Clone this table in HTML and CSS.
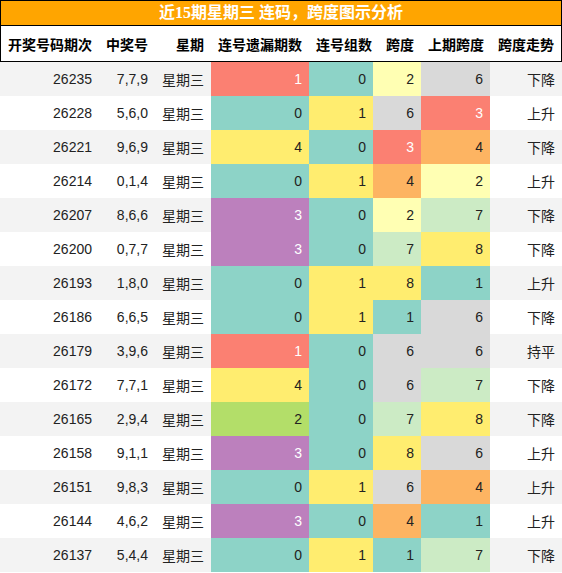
FILE: index.html
```html
<!DOCTYPE html>
<html lang="zh">
<head>
  <meta charset="UTF-8">
  <title>连码跨度图示分析</title>
  <link rel="stylesheet" href="styles.css">
</head>
<body>
  <!-- Title bar -->
  <div class="titleBar">近15期星期三 连码，跨度图示分析</div>

  <table class="spanTable">
    <colgroup>
      <col style="width:99px">
      <col style="width:56px">
      <col style="width:56px">
      <col style="width:98px">
      <col style="width:64px">
      <col style="width:48px">
      <col style="width:69px">
      <col style="width:72px">
    </colgroup>
    <thead>
      <tr>
        <th>开奖号码期次</th>
        <th>中奖号</th>
        <th>星期</th>
        <th>连号遗漏期数</th>
        <th>连号组数</th>
        <th>跨度</th>
        <th>上期跨度</th>
        <th>跨度走势</th>
      </tr>
    </thead>
    <tbody>
      <tr><td>26235</td><td>7,7,9</td><td>星期三</td><td class="c-salmon">1</td><td class="c-teal">0</td><td class="c-lyellow">2</td><td class="c-grey">6</td><td>下降</td></tr>
      <tr><td>26228</td><td>5,6,0</td><td>星期三</td><td class="c-teal">0</td><td class="c-yellow">1</td><td class="c-grey">6</td><td class="c-salmon">3</td><td>上升</td></tr>
      <tr><td>26221</td><td>9,6,9</td><td>星期三</td><td class="c-yellow">4</td><td class="c-teal">0</td><td class="c-salmon">3</td><td class="c-orange">4</td><td>下降</td></tr>
      <tr><td>26214</td><td>0,1,4</td><td>星期三</td><td class="c-teal">0</td><td class="c-yellow">1</td><td class="c-orange">4</td><td class="c-lyellow">2</td><td>上升</td></tr>
      <tr><td>26207</td><td>8,6,6</td><td>星期三</td><td class="c-purple">3</td><td class="c-teal">0</td><td class="c-lyellow">2</td><td class="c-lgreen">7</td><td>下降</td></tr>
      <tr><td>26200</td><td>0,7,7</td><td>星期三</td><td class="c-purple">3</td><td class="c-teal">0</td><td class="c-lgreen">7</td><td class="c-yellow">8</td><td>下降</td></tr>
      <tr><td>26193</td><td>1,8,0</td><td>星期三</td><td class="c-teal">0</td><td class="c-yellow">1</td><td class="c-yellow">8</td><td class="c-teal">1</td><td>上升</td></tr>
      <tr><td>26186</td><td>6,6,5</td><td>星期三</td><td class="c-teal">0</td><td class="c-yellow">1</td><td class="c-teal">1</td><td class="c-grey">6</td><td>下降</td></tr>
      <tr><td>26179</td><td>3,9,6</td><td>星期三</td><td class="c-salmon">1</td><td class="c-teal">0</td><td class="c-grey">6</td><td class="c-grey">6</td><td>持平</td></tr>
      <tr><td>26172</td><td>7,7,1</td><td>星期三</td><td class="c-yellow">4</td><td class="c-teal">0</td><td class="c-grey">6</td><td class="c-lgreen">7</td><td>下降</td></tr>
      <tr><td>26165</td><td>2,9,4</td><td>星期三</td><td class="c-green">2</td><td class="c-teal">0</td><td class="c-lgreen">7</td><td class="c-yellow">8</td><td>下降</td></tr>
      <tr><td>26158</td><td>9,1,1</td><td>星期三</td><td class="c-purple">3</td><td class="c-teal">0</td><td class="c-yellow">8</td><td class="c-grey">6</td><td>上升</td></tr>
      <tr><td>26151</td><td>9,8,3</td><td>星期三</td><td class="c-teal">0</td><td class="c-yellow">1</td><td class="c-grey">6</td><td class="c-orange">4</td><td>上升</td></tr>
      <tr><td>26144</td><td>4,6,2</td><td>星期三</td><td class="c-purple">3</td><td class="c-teal">0</td><td class="c-orange">4</td><td class="c-teal">1</td><td>上升</td></tr>
      <tr><td>26137</td><td>5,4,4</td><td>星期三</td><td class="c-teal">0</td><td class="c-yellow">1</td><td class="c-teal">1</td><td class="c-lgreen">7</td><td>下降</td></tr>
    </tbody>
  </table>
</body>
</html>
```

FILE: styles.css
```css
/* Base */
body {
  margin: 0;
  background: #ffffff;
  color: #222222;
  font-family: "Liberation Sans", "Noto Sans CJK SC", sans-serif;
  font-size: 14px;
}
/* Orange title bar */
.titleBar {
  height: 24px;
  line-height: 24px;
  background: #ffa500;
  border: 1px solid #000000;
  color: #ffffff;
  font-family: "Liberation Serif", "Noto Sans CJK SC", serif;
  font-size: 16px;
  font-weight: bold;
  text-align: center;
}
/* Table */
.spanTable {
  width: 562px;
  table-layout: fixed;
  border-collapse: separate;
  border-spacing: 0;
}
.spanTable th,
.spanTable td {
  box-sizing: border-box;
  padding: 0 7px;
  text-align: right;
  white-space: nowrap;
}
.spanTable th {
  height: 36px;
  color: #000000;
  font-weight: bold;
  background: #ffffff;
  border-bottom: 1px solid #000000;
}
.spanTable th:first-child {
  border-left: 1px solid #000000;
}
.spanTable th:last-child {
  border-right: 1px solid #000000;
}
.spanTable td {
  height: 34px;
}
.spanTable tbody tr:nth-child(odd) {
  background: #f3f3f3;
}
.spanTable tbody tr:nth-child(even) {
  background: #ffffff;
}
/* Cell colours */
.c-teal { background: #8dd3c7; }
.c-yellow { background: #ffed6f; }
.c-lyellow { background: #ffffb3; }
.c-grey { background: #d9d9d9; }
.c-orange { background: #fdb462; }
.c-lgreen { background: #ccebc5; }
.c-green { background: #b3de69; }
.c-salmon { background: #fb8072; color: #ffffff; }
.c-purple { background: #bc80bd; color: #ffffff; }
```
